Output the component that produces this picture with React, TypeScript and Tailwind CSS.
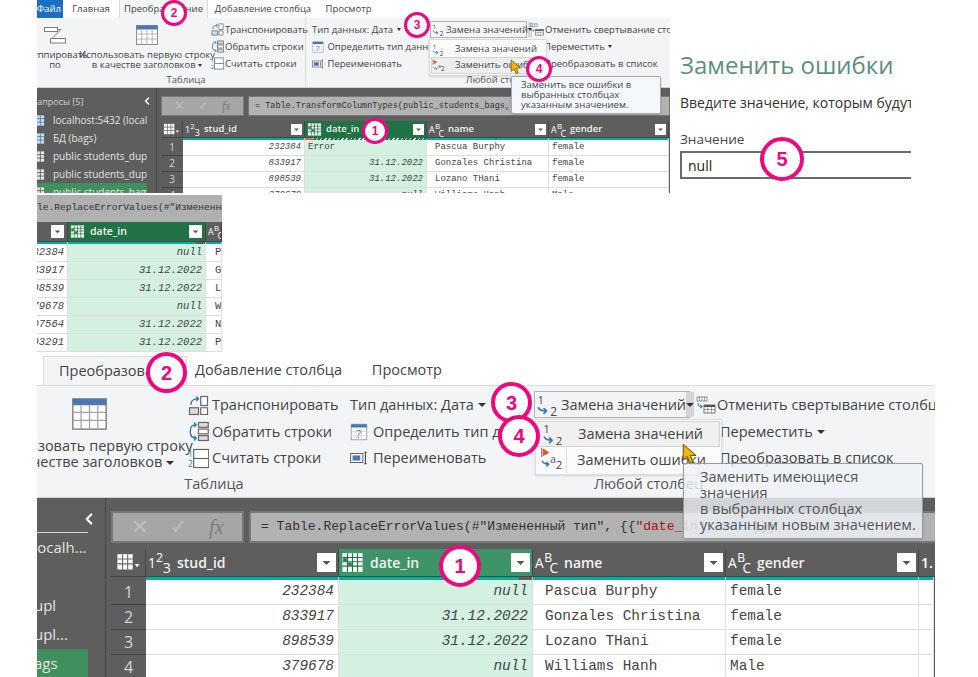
import * as React from "react"
import { ChevronLeft } from "lucide-react"

type Scale = "a" | "b" | "c"
type ColKey = "num" | "id" | "date" | "name" | "gender" | "extra"

const MONO = "font-['Liberation_Mono',monospace]"

// rows of the query table, the top shot still shows Error in the first row
const ROWS = [
  { n: 1, id: "232384", date: "null", name: "Pascua Burphy", gender: "female" },
  { n: 2, id: "833917", date: "31.12.2022", name: "Gonzales Christina", gender: "female" },
  { n: 3, id: "898539", date: "31.12.2022", name: "Lozano THani", gender: "female" },
  { n: 4, id: "379678", date: "null", name: "Williams Hanh", gender: "Male" },
  { n: 5, id: "207564", date: "31.12.2022", name: "Nelson Kira", gender: "female" },
  { n: 6, id: "393291", date: "31.12.2022", name: "Perez Alma", gender: "female" },
]

const SIZES = {
  a: {
    head: "h-[16px]",
    strip: "h-[3px]",
    row: "h-[16px]",
    mono: "text-[9px]",
    num: "text-[10px]",
    label: "text-[9.5px]",
    filter: 11,
    pad: "pr-[2px]",
    namePad: "pl-[8px]",
    genderPad: "pl-[3px]",
    cellPad: "pr-[3px]",
    icon: 15,
    gap: "gap-[4px]",
    notch: "w-0",
  },
  b: {
    head: "h-[19px]",
    strip: "h-[3px]",
    row: "h-[18px]",
    mono: "text-[10.5px]",
    num: "text-[11px]",
    label: "text-[10.5px]",
    filter: 13,
    pad: "pr-[3px]",
    namePad: "pl-[9px]",
    genderPad: "pl-[3px]",
    cellPad: "pr-[3px]",
    icon: 15,
    gap: "gap-[5px]",
    notch: "w-[9px]",
  },
  c: {
    head: "h-[27px]",
    strip: "h-[4px]",
    row: "h-[25px]",
    mono: "text-[14.4px]",
    num: "text-[16px]",
    label: "text-[14px]",
    filter: 19,
    pad: "pr-[2px]",
    namePad: "pl-[12px]",
    genderPad: "pl-[4px]",
    cellPad: "pr-[4px]",
    icon: 23,
    gap: "gap-[6px]",
    notch: "w-[13px]",
  },
}

function Caret({ big = false }: { big?: boolean }) {
  return (
    <span
      className={
        big
          ? "inline-block border-x-[4px] border-t-[4px] border-x-transparent border-t-[#333] align-middle"
          : "inline-block border-x-[2.5px] border-t-[3px] border-x-transparent border-t-[#333] align-middle"
      }
    />
  )
}

function FilterBtn({ size }: { size: number }) {
  return (
    <svg width={size} height={size} viewBox="0 0 12 12" className="shrink-0">
      <rect width="12" height="12" fill="#fff" />
      <path d="M3.5 5 H8.5 L6 7.6 Z" fill="#555" />
    </svg>
  )
}

function TypeAbc({ size }: { size: number }) {
  return (
    <svg width={size} height={size} viewBox="0 0 16 16" className="shrink-0" fontFamily="Open Sans, sans-serif" fill="#fff">
      <text x="0" y="12" fontSize="9.5">A</text>
      <text x="6.5" y="7.5" fontSize="8.5">B</text>
      <text x="10" y="15.5" fontSize="9.5">C</text>
    </svg>
  )
}

function Type123({ size }: { size: number }) {
  return (
    <svg width={size} height={size} viewBox="0 0 16 16" className="shrink-0" fontFamily="Open Sans, sans-serif" fill="#fff">
      <text x="0" y="12" fontSize="9.5">1</text>
      <text x="5.5" y="7.5" fontSize="8.5">2</text>
      <text x="10.5" y="15" fontSize="9.5">3</text>
    </svg>
  )
}

function DateType({ size }: { size: number }) {
  return (
    <svg width={size} height={size} viewBox="0 0 16 16" className="shrink-0" fill="none">
      <rect x="1" y="1.5" width="14" height="13" fill="#fff" />
      <path d="M1 4.5H15M1 7.5H15M1 10.5H15M4.5 1.5V14.5M8 1.5V14.5M11.5 1.5V14.5" stroke="#217346" strokeWidth="0.8" />
      <rect x="5" y="8" width="2.5" height="2.2" fill="#217346" />
      <rect x="1.5" y="5" width="2.5" height="2.2" fill="#217346" />
    </svg>
  )
}

function GridCorner({ size }: { size: number }) {
  return (
    <svg width={size} height={size} viewBox="0 0 18 14" className="shrink-0" fill="none">
      <rect x="1" y="1" width="11" height="11" fill="#fff" />
      <path d="M1 4.5H12M1 8H12M4.7 1V12M8.4 1V12" stroke="#666" strokeWidth="0.8" />
      <path d="M13.5 8H17L15.2 10.4Z" fill="#fff" />
    </svg>
  )
}

function QueryIcon({ size, table = true }: { size: number; table?: boolean }) {
  return (
    <svg width={size} height={size} viewBox="0 0 14 14" className="shrink-0" fill="none">
      <rect x="1" y="1.5" width="12" height="11" fill={table ? "#e8e8e8" : "#cfe0f3"} />
      <path d="M1 5H13M1 8.7H13M5 1.5V12.5M9 1.5V12.5" stroke={table ? "#555" : "#3a78b5"} strokeWidth="0.9" />
    </svg>
  )
}

function TableIcon({ w, h }: { w: number; h: number }) {
  return (
    <svg width={w} height={h} viewBox="0 0 22 20" fill="none">
      <rect x="0.5" y="0.5" width="21" height="19" fill="#fff" stroke="#8d8d8d" />
      <rect x="0.5" y="0.5" width="21" height="4" fill="#4a78b0" />
      <path d="M0.5 9H21.5M0.5 14H21.5M5.7 4.5V19.5M11 4.5V19.5M16.2 4.5V19.5" stroke="#a5a5a5" strokeWidth="0.8" />
    </svg>
  )
}

function GroupIcon() {
  return (
    <svg width="22" height="20" viewBox="0 0 22 20" fill="none" stroke="#7d7d7d">
      <rect x="0.5" y="2.5" width="13" height="4" fill="#fff" />
      <rect x="6.5" y="13.5" width="15" height="4.5" fill="#fff" />
      <path d="M13.5 4.5H17L8 13.5" />
    </svg>
  )
}

function TransposeIcon({ s }: { s: number }) {
  return (
    <svg width={s} height={s} viewBox="0 0 14 14" fill="none" className="shrink-0">
      <rect x="8.5" y="1" width="4.5" height="6" fill="#fff" stroke="#666" strokeWidth="0.8" />
      <rect x="1" y="8.5" width="6" height="4.5" fill="#ddd" stroke="#666" strokeWidth="0.8" />
      <path d="M8.5 8.5h4.5v4.5H8.5z" fill="#fff" stroke="#666" strokeWidth="0.8" />
      <path d="M2 6.5C2 3.5 3.5 2.5 7 2.5M5.5 1L7 2.5L5.5 4" stroke="#2e75b6" strokeWidth="0.9" />
    </svg>
  )
}

function ReverseIcon({ s }: { s: number }) {
  return (
    <svg width={s} height={s} viewBox="0 0 14 14" fill="none" className="shrink-0">
      <rect x="7" y="1" width="6.5" height="3.2" fill="#ddd" stroke="#666" strokeWidth="0.8" />
      <rect x="7" y="5.4" width="6.5" height="3.2" fill="#fff" stroke="#666" strokeWidth="0.8" />
      <rect x="7" y="9.8" width="6.5" height="3.2" fill="#ddd" stroke="#666" strokeWidth="0.8" />
      <path d="M5.5 2.5C2.5 2.5 1.5 4 1.5 7S2.5 11.5 5.5 11.5M4 10L5.5 11.5L4 13M4 1L5.5 2.5L4 4" stroke="#2e75b6" strokeWidth="0.9" />
    </svg>
  )
}

function CountIcon({ s }: { s: number }) {
  return (
    <svg width={s} height={s} viewBox="0 0 14 14" fill="none" className="shrink-0" fontFamily="Open Sans, sans-serif">
      <text x="0" y="6" fontSize="5.5" fill="#2e75b6">1</text>
      <text x="0" y="12.5" fontSize="5.5" fill="#2e75b6">2</text>
      <rect x="3.8" y="1" width="10" height="12" fill="#fff" stroke="#666" strokeWidth="0.8" />
      <path d="M3.8 7H13.8" stroke="#666" strokeWidth="0.8" />
    </svg>
  )
}

function DetectIcon({ s }: { s: number }) {
  return (
    <svg width={s} height={s} viewBox="0 0 14 14" fill="none" className="shrink-0" fontFamily="Open Sans, sans-serif">
      <rect x="1" y="1" width="12" height="12" fill="#fff" stroke="#a8a8a8" strokeWidth="0.8" />
      <rect x="1" y="1" width="12" height="2.5" fill="#3f78b5" />
      <path d="M5 3.5V13M9 3.5V13M1 6.5H13M1 10H13" stroke="#cfcfcf" strokeWidth="0.6" />
      <text x="5" y="11.5" fontSize="8" fill="#2e75b6">?</text>
    </svg>
  )
}

function RenameIcon({ s }: { s: number }) {
  return (
    <svg width={s} height={s} viewBox="0 0 14 14" fill="none" className="shrink-0">
      <rect x="0.5" y="3.5" width="9.5" height="7" fill="#fff" stroke="#666" strokeWidth="0.8" />
      <rect x="2" y="5" width="6" height="4" fill="#4a78b0" />
      <path d="M11 2.5h2M11 11.5h2M12 2.5V11.5" stroke="#444" strokeWidth="0.8" />
    </svg>
  )
}

function ReplaceIcon({ s }: { s: number }) {
  return (
    <svg width={s} height={s} viewBox="0 0 16 16" fill="none" className="shrink-0" fontFamily="Open Sans, sans-serif">
      <text x="1" y="7" fontSize="7.5" fill="#444">1</text>
      <path d="M1.5 9.5C2 11.5 3.5 12 7 12M5 10L7 12L5 14" stroke="#2e75b6" strokeWidth="1.1" />
      <text x="9.5" y="15.5" fontSize="8" fill="#444">2</text>
    </svg>
  )
}

function ReplaceErrIcon({ s }: { s: number }) {
  return (
    <svg width={s} height={s} viewBox="0 0 16 16" fill="none" className="shrink-0" fontFamily="Open Sans, sans-serif">
      <path d="M1.2 0.5V7" stroke="#777" strokeWidth="0.8" />
      <path d="M2 1L6.5 3.8L2 6.5Z" fill="#e0552b" />
      <path d="M1.5 9.5C2 11.5 3.5 12 6 12M4.5 10.5L6 12L4.5 13.5" stroke="#2e75b6" strokeWidth="1" />
      <text x="7" y="11" fontSize="7.5" fill="#555">a</text>
      <text x="11" y="15" fontSize="8" fill="#444">2</text>
    </svg>
  )
}

function UnpivotIcon({ w, h }: { w: number; h: number }) {
  return (
    <svg width={w} height={h} viewBox="0 0 20 18" fill="none" className="shrink-0">
      <rect x="1" y="1" width="10" height="4" fill="#fff" stroke="#777" strokeWidth="0.8" />
      <path d="M3.5 1V5M6 1V5M8.5 1V5" stroke="#777" strokeWidth="0.7" />
      <path d="M2 7C2 10 3 10.5 6 10.5M4.5 9L6 10.5L4.5 12" stroke="#2e75b6" strokeWidth="1.1" />
      <rect x="8" y="9" width="11" height="8" fill="#fff" stroke="#555" strokeWidth="0.8" />
      <rect x="8" y="9" width="11" height="2" fill="#555" />
      <path d="M8 13.5H19M11.7 11V17M15.4 11V17" stroke="#777" strokeWidth="0.7" />
    </svg>
  )
}

function Cursor({ w, h, className }: { w: number; h: number; className: string }) {
  return (
    <svg width={w} height={h} viewBox="0 0 14 18" className={className}>
      <path d="M1 1V14L4.3 11L6.6 16.6L9 15.6L6.8 10.2H11.6Z" fill="#f5b30a" stroke="#5f4a08" strokeWidth="0.8" />
    </svg>
  )
}

function Badge({ n, className }: { n: number; className: string }) {
  return (
    <div className={`absolute z-30 flex items-center justify-center rounded-full bg-white border-[#f0067f] font-bold text-[#f0067f] font-['Liberation_Sans',sans-serif] ${className}`}>
      {n}
    </div>
  )
}

function DataTable({ scale, cols, grid, error = false }: { scale: Scale; cols: ColKey[]; grid: string; error?: boolean }) {
  const s = SIZES[scale]
  const rows = scale === "a" ? ROWS.slice(0, 4) : scale === "b" ? ROWS : ROWS.slice(0, 4)

  return (
    <div>
      <div className={`grid ${grid} ${s.head}`}>
        {cols.map((k) => {
          if (k === "num")
            return (
              <div key={k} className="flex items-center justify-center border-r border-[#454545]">
                <GridCorner size={s.icon + 2} />
              </div>
            )
          if (k === "extra")
            return (
              <div key={k} className={`flex items-center overflow-hidden pl-[2px] font-semibold text-white ${s.label}`}>
                1.
              </div>
            )
          const active = k === "date"
          const label = k === "id" ? "stud_id" : k === "date" ? "date_in" : k
          const onlyFilter = scale === "b" && k === "id"
          const onlyIcon = scale === "b" && k === "name"
          return (
            <div
              key={k}
              className={`flex items-center overflow-hidden border-r border-[#454545] pl-[2px] ${s.pad} ${s.gap} ${active ? (scale === "b" ? "bg-[#217346]" : scale === "a" ? "bg-[#217346]" : "bg-[#3f9467]") : ""} ${onlyFilter ? "justify-end" : ""}`}
            >
              {!onlyFilter && (k === "id" ? <Type123 size={s.icon} /> : active ? <DateType size={s.icon} /> : <TypeAbc size={s.icon} />)}
              {!onlyFilter && !onlyIcon && <span className={`font-semibold text-[#f2f2f2] ${s.label}`}>{label}</span>}
              {!onlyIcon && <span className="flex-1" />}
              {!onlyIcon && <FilterBtn size={s.filter} />}
            </div>
          )
        })}
      </div>
      <div className={`grid ${grid} ${s.strip} border-t border-[#454545]`}>
        {cols.map((k) => {
          if (k === "num") return <div key={k} />
          if (k === "date" && error)
            return (
              <div key={k} className="flex h-full">
                <div className="w-[8px] bg-[#f05a4f]" />
                <div className="flex-1 bg-[repeating-linear-gradient(135deg,#ffffff_0,#ffffff_1px,#217346_1px,#217346_3px)]" />
              </div>
            )
          return (
            <div key={k} className="flex justify-end border-r border-white/60 bg-[#00b09b]">
              {k === "date" && <div className={`${s.notch} bg-[#5e5e5e]`} />}
            </div>
          )
        })}
      </div>
      {rows.map((r, i) => (
        <div key={r.n} className={`grid ${grid} ${s.row}`}>
          {cols.map((k) => {
            if (k === "num")
              return (
                <div key={k} className={`flex items-center justify-center border-b border-[#454545] text-[#d4d4d4] ${s.num}`}>
                  {r.n}
                </div>
              )
            const base = `flex items-center overflow-hidden whitespace-nowrap border-b border-r border-[#dedede] ${MONO} ${s.mono} text-[#444]`
            if (k === "id")
              return (
                <div key={k} className={`${base} justify-end bg-white italic ${s.cellPad}`}>
                  {r.id}
                </div>
              )
            if (k === "date") {
              if (error && i === 0)
                return (
                  <div key={k} className={`${base} bg-[#d4f0e1] pl-[3px] text-[#2f8f5b]`}>
                    Error
                  </div>
                )
              return (
                <div key={k} className={`${base} justify-end bg-[#d4f0e1] italic ${s.cellPad}`}>
                  {error && r.date === "null" && i === 3 ? "null" : r.date}
                </div>
              )
            }
            if (k === "name")
              return (
                <div key={k} className={`${base} bg-white ${s.namePad}`}>
                  {r.name}
                </div>
              )
            if (k === "gender")
              return (
                <div key={k} className={`${base} bg-white ${s.genderPad}`}>
                  {r.gender}
                </div>
              )
            return <div key={k} className={`${base} bg-white`} />
          })}
        </div>
      ))}
    </div>
  )
}

// top shot: ribbon, error still in the first row
function ShotTop() {
  const rowCls = "flex h-[17px] items-center gap-[1px] whitespace-nowrap"
  return (
    <div className="absolute left-[37px] top-0 h-[193px] w-[633px] overflow-hidden bg-[#5e5e5e]">
      <div className="flex h-[18px] items-end bg-white text-[9.5px] text-[#444]">
        <div className="flex h-full w-[26px] items-center justify-end overflow-hidden bg-[#1b6ec2] pr-[2px] text-white">Файл</div>
        <div className="flex h-full w-[56px] items-center justify-center">Главная</div>
        <div className="flex h-[18px] w-[89px] items-center justify-center whitespace-nowrap border-x border-[#dcdcdc] bg-[#f3f4f6]">Преобразование</div>
        <div className="flex h-full w-[110px] items-center justify-center whitespace-nowrap">Добавление столбца</div>
        <div className="flex h-full w-[61px] items-center justify-center">Просмотр</div>
      </div>
      <div className="flex h-[70px] border-b border-[#d2d2d2] bg-[#f3f4f6] text-[9.5px] leading-[10px] text-[#444]">
        <div className="flex w-[269px] shrink-0 flex-col border-r border-[#dcdcdc]">
          <div className="flex h-[57px]">
            <div className="-ml-[15px] flex w-[66px] shrink-0 flex-col items-center pt-[7px]">
              <GroupIcon />
              <div className="mt-[5px] text-center">Группировать<br />по</div>
            </div>
            <div className="flex w-[118px] shrink-0 flex-col items-center pt-[7px]">
              <TableIcon w={22} h={20} />
              <div className="mt-[5px] whitespace-nowrap text-center">Использовать первую строку<br />в качестве заголовков <Caret /></div>
            </div>
            <div className="ml-[5px] flex flex-col pt-[3px]">
              <div className={rowCls}><TransposeIcon s={13} />Транспонировать</div>
              <div className={rowCls}><ReverseIcon s={13} />Обратить строки</div>
              <div className={rowCls}><CountIcon s={13} />Считать строки</div>
            </div>
          </div>
          <div className="text-center pl-[30px] text-[#555]">Таблица</div>
        </div>
        <div className="flex w-[391px] shrink-0 flex-col">
          <div className="flex h-[57px]">
            <div className="flex w-[124px] shrink-0 flex-col pl-[6px] pt-[3px]">
              <div className={rowCls}>Тип данных: Дата&nbsp;<Caret /></div>
              <div className={rowCls}><DetectIcon s={12} />&nbsp;Определить тип данных</div>
              <div className={rowCls}><RenameIcon s={12} />&nbsp;Переименовать</div>
            </div>
            <div className="w-[100px] shrink-0 pt-[3px]">
              <div className="flex h-[17px] w-[97px] items-center whitespace-nowrap border border-[#b4b4b4] pl-[1px]">
                <ReplaceIcon s={13} />
                <span className="ml-[1px] flex-1">Замена значений</span>
                <span className="flex h-full w-[7px] items-center justify-center bg-[#d4d4d4]"><Caret /></span>
              </div>
            </div>
            <div className="flex flex-col pt-[3px]">
              <div className={rowCls}><UnpivotIcon w={14} h={13} />Отменить свертывание столбцов</div>
              <div className={rowCls}><span className="w-[13px]" />Переместить&nbsp;<Caret /></div>
              <div className={rowCls}><span className="w-[13px]" />Преобразовать в список</div>
            </div>
          </div>
          <div className="text-center text-[#555]">Любой столбец</div>
        </div>
      </div>

      <div className="flex h-[105px]">
        <div className="relative w-[120px] shrink-0 border-r border-[#474747] text-[10px] leading-[18px] text-[#e2e2e2]">
          <div className="-ml-[5px] flex h-[23px] items-end text-[9px] text-[#cfcfcf]">Запросы [5]</div>
          <ChevronLeft className="absolute right-[3px] top-[7px] text-white" size={12} strokeWidth={3} />
          {[
            { t: "localhost:5432 (localh...", table: false },
            { t: "БД (bags)", table: false },
            { t: "public students_dupl", table: true },
            { t: "public students_dupl...", table: true },
            { t: "public students_bags", table: true, on: true },
          ].map((q) => (
            <div key={q.t} className={`flex h-[18px] w-[110px] items-center gap-[8px] overflow-hidden whitespace-nowrap pl-0 ${q.on ? "bg-[#3f8f5f]" : ""}`}>
              <span className="-ml-[5px] flex"><QueryIcon size={13} table={q.table} /></span>
              {q.t}
            </div>
          ))}
        </div>
        <div className="flex-1 pl-[4px] pt-[8px]">
          <div className="flex h-[20px] gap-[4px]">
            <div className="flex w-[83px] items-center justify-around border border-[#777] bg-[#a6a6a6] px-[6px] text-[13px] text-[#bdbdbd]">
              <span>✕</span><span>✓</span>
              <span className="font-['Liberation_Serif',serif] text-[12px] italic text-[#7c7c7c]">fx</span>
            </div>
            <div className={`flex flex-1 items-center whitespace-nowrap border border-[#777] bg-[#b2b2b2] pl-[6px] text-[8.5px] text-[#333] ${MONO}`}>
              = Table.TransformColumnTypes(public_students_bags,&#123;&#123;
            </div>
          </div>
          <div className="mt-[5px]">
            <DataTable scale="a" cols={["num", "id", "date", "name", "gender"]} grid="grid-cols-[22px_122px_122px_122px_120px]" error />
          </div>
        </div>
      </div>

      <div className="absolute left-[392px] top-[39px] z-10 w-[118px] border border-[#d8d8d8] bg-[#fbfbfb] p-[1px] text-[9.5px] text-[#444] shadow-sm">
        <div className="flex h-[16px] items-center gap-[10px] pl-[1px]"><ReplaceIcon s={13} />Замена значений</div>
        <div className="flex h-[17px] items-center gap-[10px] border border-[#d4d4d4] bg-[#eeeeee]"><ReplaceErrIcon s={13} />Заменить ошибки</div>
      </div>
      <Cursor w={13} h={16} className="absolute left-[473px] top-[59px] z-20" />
      <div className="absolute left-[474px] top-[76px] z-20 w-[150px] rounded-[2px] border border-[#a9a9a9] bg-[#f4f7fb] py-[3px] pl-[9px] text-[9.5px] leading-[10px] text-[#444] shadow-sm">
        Заменить все ошибки в<br />выбранных столбцах<br />указанным значением.
      </div>
    </div>
  )
}

function ShotMiddle() {
  return (
    <div className="absolute left-[37px] top-[195px] h-[160px] w-[185px] overflow-hidden bg-white">
      <div className={`flex h-[27px] items-center whitespace-nowrap bg-[#b0b0b0] text-[9.6px] text-[#333] ${MONO}`}>
        le.ReplaceErrorValues(#"Измененный тип"
      </div>
      <div className="bg-[#5e5e5e]">
        <DataTable scale="b" cols={["id", "date", "name"]} grid="grid-cols-[31px_138px_16px]" />
      </div>
    </div>
  )
}

// bottom shot: the same ribbon, enlarged
function ShotBottom() {
  const rowCls = "flex h-[26.5px] items-center whitespace-nowrap"
  return (
    <div className="absolute left-[37px] top-[355px] h-[322px] w-[898px] overflow-hidden bg-[#5e5e5e]">
      <div className="flex h-[31px] items-end border-b border-[#dcdcdc] bg-white text-[14.5px] text-[#444]">
        <div className="h-full w-[6px]" />
        <div className="flex h-[29px] w-[144px] items-center whitespace-nowrap border-x border-t border-[#dcdcdc] bg-[#f3f4f6] pl-[15px]">Преобразование</div>
        <div className="flex h-full w-[155px] items-center justify-end whitespace-nowrap">Добавление столбца</div>
        <div className="flex h-full w-[100px] items-center justify-end">Просмотр</div>
      </div>
      <div className="flex h-[112px] border-b border-[#cfcfcf] bg-[#f3f4f6] text-[14.5px] leading-[16px] text-[#444]">
        <div className="flex w-[304px] shrink-0 flex-col">
          <div className="flex h-[90px]">
            <div className="-ml-[47px] flex w-[198px] shrink-0 flex-col items-center pt-[12px]">
              <TableIcon w={35} h={32} />
              <div className="mt-[8px] whitespace-nowrap text-center">Использовать первую строку<br />в качестве заголовков <Caret big /></div>
            </div>
            <div className="flex flex-col pt-[6px]">
              <div className={`${rowCls} gap-[3px]`}><TransposeIcon s={21} />Транспонировать</div>
              <div className={`${rowCls} gap-[3px]`}><ReverseIcon s={21} />Обратить строки</div>
              <div className={`${rowCls} gap-[3px]`}><CountIcon s={21} />Считать строки</div>
            </div>
          </div>
          <div className="pl-[50px] text-center text-[#555]">Таблица</div>
        </div>
        <div className="my-[3px] w-px bg-[#dcdcdc]" />
        <div className="flex w-[615px] shrink-0 flex-col">
          <div className="flex h-[90px]">
            <div className="flex w-[193px] shrink-0 flex-col pl-[9px] pt-[6px]">
              <div className={rowCls}>Тип данных: Дата&nbsp;<Caret big /></div>
              <div className={`${rowCls} gap-[5px]`}><DetectIcon s={18} />Определить тип данных</div>
              <div className={`${rowCls} gap-[5px]`}><RenameIcon s={18} />Переименовать</div>
            </div>
            <div className="w-[162px] shrink-0 pt-[5px]">
              <div className="flex h-[27px] w-[156px] items-center whitespace-nowrap border border-[#b4b4b4] pl-[1px]">
                <ReplaceIcon s={24} />
                <span className="ml-[1px] flex-1">Замена значений</span>
                <span className="flex h-full w-[14px] items-center justify-center bg-[#d4d4d4]"><Caret big /></span>
              </div>
            </div>
            <div className="flex flex-col pt-[6px]">
              <div className={`${rowCls} gap-[1px]`}><UnpivotIcon w={20} h={18} />Отменить свертывание столбцов</div>
              <div className={rowCls}><span className="w-[24px]" />Переместить&nbsp;<Caret big /></div>
              <div className={rowCls}><span className="w-[24px]" />Преобразовать в список</div>
            </div>
          </div>
          <div className="text-center text-[#555]">Любой столбец</div>
        </div>
      </div>

      <div className="flex h-[179px]">
        <div className="relative w-[69px] shrink-0 border-r border-[#474747] text-[15px] leading-[29px] text-[#e2e2e2]">
          <div className="h-[35px] w-[51px] border-b border-[#d8d8d8]" />
          <ChevronLeft className="absolute right-[7px] top-[12px] text-white" size={18} strokeWidth={3} />
          {[
            { t: "localhost:5432 (localh...", m: "-ml-[113px]" },
            { t: "БД (bags)", m: "-ml-[113px]" },
            { t: "public students_dupl", m: "-ml-[126px]" },
            { t: "public students_dupl...", m: "-ml-[126px]" },
            { t: "public students_bags", m: "-ml-[126px]", on: true },
          ].map((q) => (
            <div key={q.t} className={`h-[29px] w-[51px] overflow-hidden whitespace-nowrap ${q.on ? "bg-[#3f8f5f]" : ""}`}>
              <div className={q.m}>{q.t}</div>
            </div>
          ))}
        </div>
        <div className="flex-1 pl-[5px] pt-[13px]">
          <div className="flex h-[32px] gap-[5px]">
            <div className="flex w-[133px] items-center justify-around border-2 border-[#777] bg-[#a6a6a6] px-[8px] text-[21px] text-[#bdbdbd]">
              <span>✕</span><span>✓</span>
              <span className="font-['Liberation_Serif',serif] text-[20px] italic text-[#7c7c7c]">fx</span>
            </div>
            <div className={`flex flex-1 items-center whitespace-nowrap border-2 border-r-0 border-[#777] bg-[#b2b2b2] pl-[10px] text-[13px] text-[#333] ${MONO}`}>
              <span>= Table.ReplaceErrorValues(#"Измененный тип", &#123;&#123;<span className="text-[#a31515]">"date_in"</span>, <span className="text-[#098a8a]">null</span>&#125;&#125;)</span>
            </div>
          </div>
          <div className="mt-[6px]">
            <DataTable scale="c" cols={["num", "id", "date", "name", "gender", "extra"]} grid="grid-cols-[35px_193px_194px_193px_193px_15px]" />
          </div>
        </div>
      </div>

      <div className="absolute left-[498px] top-[64px] z-10 w-[187px] border border-[#dcdcdc] bg-[#fbfbfb] p-[1px] text-[14.5px] text-[#444] shadow-sm">
        <div className="flex h-[26px] items-center border border-[#d4d4d4] bg-[#f0f0f0]">
          <span className="flex w-[30px] justify-center"><ReplaceIcon s={23} /></span>
          <span className="pl-[10px]">Замена значений</span>
        </div>
        <div className="flex h-[26px] items-center">
          <span className="flex h-full w-[30px] justify-center border-r border-[#e0e0e0]"><ReplaceErrIcon s={23} /></span>
          <span className="pl-[10px]">Заменить ошибки</span>
        </div>
      </div>
      <Cursor w={17} h={22} className="absolute left-[645px] top-[88px] z-20" />
      <div className="absolute left-[646px] top-[108px] z-20 w-[240px] rounded-[2px] border border-[#9a9a9a] bg-[#eef2f8]/80 py-[5px] pl-[16px] text-[14.5px] leading-[16px] text-[#555] shadow-sm">
        Заменить имеющиеся значения<br />в выбранных столбцах<br />указанным новым значением.
      </div>
    </div>
  )
}

function ErrorDialog() {
  return (
    <div className="absolute left-[670px] top-[30px] w-[241px] overflow-hidden bg-white pl-[10px] pt-[18px]">
      <div className="whitespace-nowrap text-[24px] leading-[34px] text-[#5b8f7e]">Заменить ошибки</div>
      <div className="mt-[11px] whitespace-nowrap text-[14px] leading-[20px] text-[#333]">Введите значение, которым будут заменены</div>
      <div className="mt-[17px] text-[13.5px] leading-[18px] text-[#444]">Значение</div>
      <div className="mt-[3px] flex h-[28px] items-center border-2 border-r-0 border-[#6a6a6a] pl-[6px] text-[14px] text-[#222]">null</div>
      <div className="h-[12px]" />
    </div>
  )
}

export default function App() {
  return (
    <div className="relative h-[677px] w-[978px] overflow-hidden bg-white font-['Open_Sans',sans-serif]">
      <ShotTop />
      <ErrorDialog />
      <ShotMiddle />
      <ShotBottom />

      <Badge n={2} className="left-[161px] top-0 h-[26px] w-[26px] border-[3px] text-[12px]" />
      <Badge n={3} className="left-[404px] top-[12px] h-[26px] w-[26px] border-[3px] text-[12px]" />
      <Badge n={4} className="left-[526px] top-[56px] h-[26px] w-[26px] border-[3px] text-[12px]" />
      <Badge n={1} className="left-[362px] top-[118px] h-[26px] w-[26px] border-[3px] text-[12px]" />
      <Badge n={5} className="left-[760px] top-[137px] h-[44px] w-[44px] border-[4px] text-[20px]" />
      <Badge n={2} className="left-[146px] top-[352px] h-[41px] w-[41px] border-[4px] text-[20px]" />
      <Badge n={3} className="left-[491px] top-[382px] h-[41px] w-[41px] border-[4px] text-[20px]" />
      <Badge n={4} className="left-[498px] top-[415px] h-[42px] w-[42px] border-[4px] text-[20px]" />
      <Badge n={1} className="left-[439px] top-[545px] h-[42px] w-[42px] border-[4px] text-[20px]" />
    </div>
  )
}
